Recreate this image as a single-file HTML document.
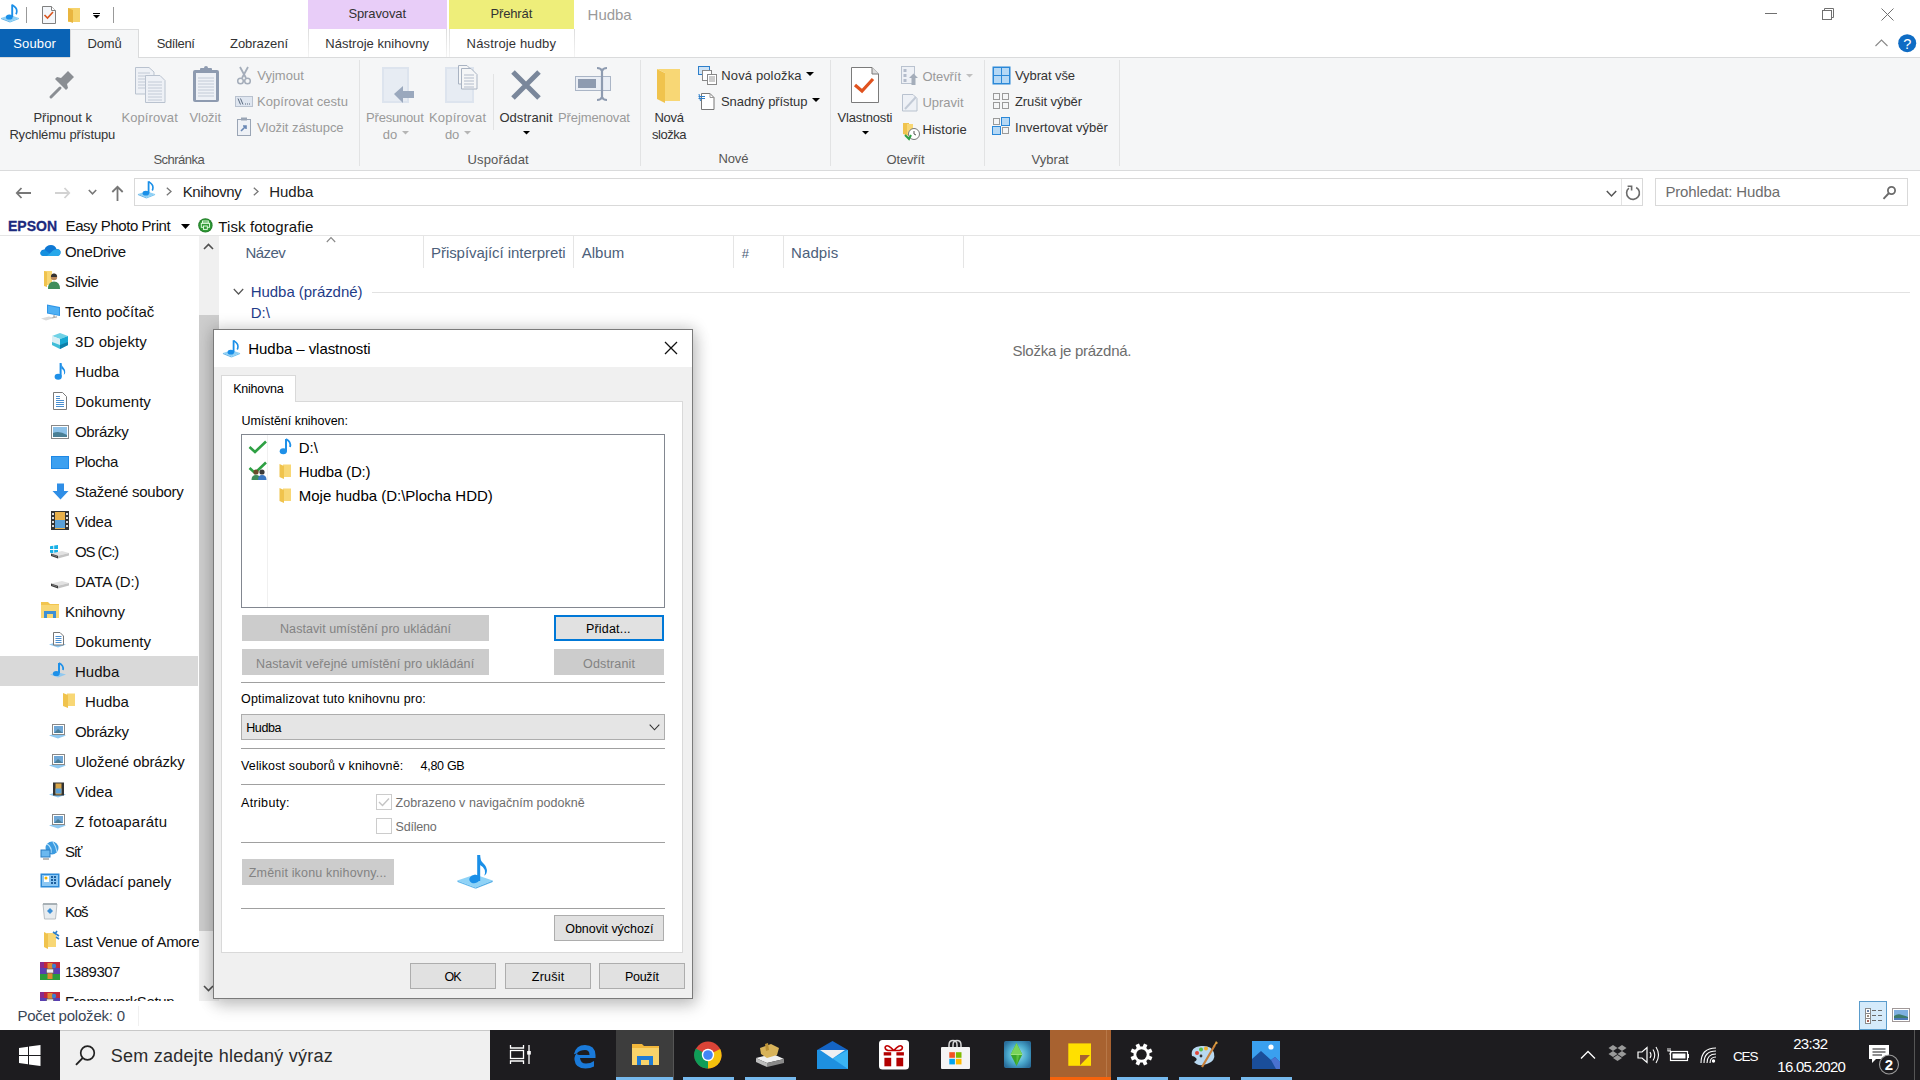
<!DOCTYPE html>
<html><head><meta charset="utf-8"><title>Hudba</title>
<style>
html,body{margin:0;padding:0;width:1920px;height:1080px;overflow:hidden;background:#fff;}
body{position:relative;font-family:"Liberation Sans", sans-serif;}
.t{position:absolute;white-space:nowrap;line-height:1;}
.r{position:absolute;}
svg.r{overflow:visible;}
</style></head><body>
<div class="r" style="left:0px;top:0px;width:1920px;height:29px;background:#fff"></div>
<svg class="r" style="left:0px;top:0px;" width="20" height="23" viewBox="0 0 20 23"><g transform="scale(1.0)"><path d="M1 18 L10 15 L19 18 L10 21.5 Z" fill="#8fd0f5"/><path d="M1 18 L10 21.5 V22.5 L1 19 Z" fill="#5fb0e6"/><path d="M10 21.5 L19 18 V19 L10 22.5 Z" fill="#6dc0f0"/><path d="M12.2 4.5 V17" stroke="#1a8fe8" stroke-width="1.9" fill="none"/><ellipse cx="9.3" cy="17" rx="3.4" ry="2.6" fill="#1a8fe8"/><path d="M12.2 5 Q16.8 7.5 16.8 11 Q16.8 13 16 14.2" stroke="#1a8fe8" stroke-width="1.7" fill="none"/></g></svg>
<div class="r" style="left:26px;top:7px;width:1px;height:16px;background:#999"></div>
<svg class="r" style="left:41px;top:6px;" width="16" height="18" viewBox="0 0 16 18"><path d="M1.5 0.5 H10.5 L14.5 4.5 V17.5 H1.5 Z" fill="#f4f7fb" stroke="#808080"/><path d="M10.5 0.5 V4.5 H14.5" fill="#fff" stroke="#808080"/><path d="M3.5 9 L6.5 12 L12 6" stroke="#d9541e" stroke-width="1.6" fill="none"/></svg>
<svg class="r" style="left:67px;top:7px;" width="14" height="17" viewBox="0 0 14 17"><path d="M1 1 H13 V15 H1 Z" fill="#f6d36b"/><path d="M1 1 L6 3 V16 L1 14 Z" fill="#e9b53f"/></svg>
<div class="r" style="left:93px;top:13px;width:7px;height:1px;background:#000"></div>
<svg class="r" style="left:93px;top:15px;" width="7" height="4" viewBox="0 0 7 4"><path d="M0 0 H7 L3.5 3.5 Z" fill="#000"/></svg>
<div class="r" style="left:113px;top:7px;width:1px;height:16px;background:#999"></div>
<div class="r" style="left:308px;top:0px;width:139px;height:29px;background:#e8cdf8"></div>
<div class="r" style="left:449px;top:0px;width:125px;height:29px;background:#eeee7a"></div>
<div class="t" style="top:7.00px;font-size:13px;color:#333;letter-spacing:-0.112px;left:348.40px;">Spravovat</div>
<div class="t" style="top:7.00px;font-size:13px;color:#333;letter-spacing:-0.121px;left:490.40px;">Přehrát</div>
<div class="t" style="top:7.00px;font-size:15px;color:#9a9a9a;letter-spacing:-0.037px;left:587.60px;">Hudba</div>
<div class="r" style="left:1765px;top:13px;width:12px;height:1px;background:#707070"></div>
<svg class="r" style="left:1822px;top:8px;" width="14" height="13" viewBox="0 0 14 13"><rect x="0.5" y="2.5" width="9" height="9" fill="none" stroke="#707070"/><path d="M2.5 2.5 V0.5 H11.5 V9.5 H9.5" fill="none" stroke="#707070"/></svg>
<svg class="r" style="left:1881px;top:8px;" width="13" height="13" viewBox="0 0 13 13"><path d="M0.5 0.5 L12.5 12.5 M12.5 0.5 L0.5 12.5" stroke="#707070" stroke-width="1"/></svg>
<div class="r" style="left:0px;top:29px;width:1920px;height:28px;background:#fff"></div>
<div class="r" style="left:0px;top:29px;width:70px;height:28px;background:#0a63b5"></div>
<div class="t" style="top:37.00px;font-size:13px;color:#fff;letter-spacing:0.125px;left:13.30px;">Soubor</div>
<div class="r" style="left:70px;top:29px;width:69px;height:29px;background:#f5f6f7;border-left:1px solid #dadbdc;border-right:1px solid #dadbdc;border-top:1px solid #dadbdc;box-sizing:border-box"></div>
<div class="t" style="top:37.00px;font-size:13px;color:#333;letter-spacing:-0.142px;left:87.50px;">Domů</div>
<div class="t" style="top:37.00px;font-size:13px;color:#333;letter-spacing:-0.367px;left:156.70px;">Sdílení</div>
<div class="t" style="top:37.00px;font-size:13px;color:#333;letter-spacing:-0.062px;left:230.00px;">Zobrazení</div>
<div class="r" style="left:308px;top:29px;width:1px;height:28px;background:linear-gradient(#ddd,#f4f4f4)"></div>
<div class="r" style="left:446px;top:29px;width:1px;height:28px;background:linear-gradient(#ddd,#f4f4f4)"></div>
<div class="r" style="left:449px;top:29px;width:1px;height:28px;background:linear-gradient(#ddd,#f4f4f4)"></div>
<div class="r" style="left:574px;top:29px;width:1px;height:28px;background:linear-gradient(#ddd,#f4f4f4)"></div>
<div class="t" style="top:37.00px;font-size:13px;color:#333;letter-spacing:0.02px;left:325.30px;">Nástroje knihovny</div>
<div class="t" style="top:37.00px;font-size:13px;color:#333;letter-spacing:0.146px;left:466.60px;">Nástroje hudby</div>
<svg class="r" style="left:1875px;top:39px;" width="13" height="8" viewBox="0 0 13 8"><path d="M0.5 7 L6.5 1 L12.5 7" fill="none" stroke="#888" stroke-width="1.1"/></svg>
<svg class="r" style="left:1898px;top:34px;" width="19" height="19" viewBox="0 0 19 19"><circle cx="9.2" cy="9.2" r="9" fill="#0f6cc4"/><text x="9.2" y="14.6" text-anchor="middle" font-family="Liberation Sans" font-size="14.5" fill="#fff">?</text></svg>
<div class="r" style="left:0px;top:57px;width:1920px;height:114px;background:#f5f6f7;border-top:1px solid #dadbdc;border-bottom:1px solid #dadbdc;box-sizing:border-box"></div>
<div class="r" style="left:70px;top:57px;width:68px;height:1px;background:#f5f6f7"></div>
<div class="r" style="left:359px;top:60px;width:1px;height:106px;background:#e2e3e4"></div>
<div class="r" style="left:640px;top:60px;width:1px;height:106px;background:#e2e3e4"></div>
<div class="r" style="left:830px;top:60px;width:1px;height:106px;background:#e2e3e4"></div>
<div class="r" style="left:984px;top:60px;width:1px;height:106px;background:#e2e3e4"></div>
<div class="r" style="left:1119px;top:60px;width:1px;height:106px;background:#e2e3e4"></div>
<div class="r" style="left:493px;top:74px;width:1px;height:56px;background:#e2e3e4"></div>
<svg class="r" style="left:48px;top:70px;" width="30" height="30" viewBox="0 0 30 30"><path d="M3 27 L12 18" stroke="#8a8e93" stroke-width="3" stroke-linecap="round"/><path d="M10 12 L18 20 L20 18 L19 14 L26 7 L20 1 L13 8 L9 7 L7 9 Z" fill="#8a8e93"/></svg>
<div class="t" style="top:111.00px;font-size:13px;color:#333;letter-spacing:-0.003px;left:33.40px;">Připnout k</div>
<div class="t" style="top:128.00px;font-size:13px;color:#333;letter-spacing:-0.155px;left:9.40px;">Rychlému přístupu</div>
<svg class="r" style="left:135px;top:67px;" width="31" height="36" viewBox="0 0 31 36"><path d="M0.5 0.5 H14 L19 5 V27 H0.5 Z" fill="#eef1f6" stroke="#b9c2cf"/><g stroke="#c2cad6"><path d="M3 6H15M3 9H15M3 12H15M3 15H15M3 18H15M3 21H15"/></g>
<path d="M10.5 8.5 H25 L30 13.5 V35.5 H10.5 Z" fill="#eef1f6" stroke="#b9c2cf"/><g stroke="#c2cad6"><path d="M13 15H27M13 18H27M13 21H27M13 24H27M13 27H27M13 30H27M13 33H27"/></g></svg>
<div class="t" style="top:111.00px;font-size:13px;color:#9a9a9a;letter-spacing:0.084px;left:121.45px;">Kopírovat</div>
<svg class="r" style="left:192px;top:66px;" width="28" height="37" viewBox="0 0 28 37"><rect x="1" y="4" width="26" height="32" rx="2" fill="#8e9bb0"/><rect x="4" y="7" width="20" height="27" fill="#eef1f6"/><g stroke="#c2cad6"><path d="M6 12H22M6 15H22M6 18H22M6 21H22M6 24H22M6 27H22M6 30H22"/></g><rect x="8" y="2" width="12" height="5" rx="1" fill="#8e9bb0"/><circle cx="14" cy="2" r="2" fill="#8e9bb0"/></svg>
<div class="t" style="top:111.00px;font-size:13px;color:#9a9a9a;letter-spacing:-0.03px;left:189.40px;">Vložit</div>
<svg class="r" style="left:237px;top:66px;" width="14" height="19" viewBox="0 0 14 19"><path d="M3 1 L9 12 M11 1 L5 12" stroke="#a4adba" stroke-width="1.8"/><circle cx="3.5" cy="15" r="2.8" fill="none" stroke="#a4adba" stroke-width="1.5"/><circle cx="10.5" cy="15" r="2.8" fill="none" stroke="#a4adba" stroke-width="1.5"/></svg>
<div class="t" style="top:69.00px;font-size:13px;color:#9a9a9a;left:257.30px;">Vyjmout</div>
<svg class="r" style="left:235px;top:96px;" width="18" height="11" viewBox="0 0 18 11"><rect x="0.5" y="0.5" width="17" height="10" fill="#dfe6f0" stroke="#b9c2cf"/><path d="M3 2.5 L5.5 8.5 M5.5 2.5 L8 8.5" stroke="#5a6a80" stroke-width="1"/><g fill="#5a6a80"><rect x="10" y="7.5" width="1" height="1"/><rect x="12" y="7.5" width="1" height="1"/><rect x="14" y="7.5" width="1" height="1"/></g></svg>
<div class="t" style="top:95.00px;font-size:13px;color:#9a9a9a;letter-spacing:0.045px;left:257.00px;">Kopírovat cestu</div>
<svg class="r" style="left:237px;top:117px;" width="14" height="19" viewBox="0 0 14 19"><rect x="0.5" y="2.5" width="13" height="16" fill="#eef1f6" stroke="#9aa5b5"/><rect x="4" y="0.5" width="6" height="3" fill="#9aa5b5"/><path d="M4 14 L9 9 M6 9 H9 V12" stroke="#6a88b5" stroke-width="1.6" fill="none"/></svg>
<div class="t" style="top:121.00px;font-size:13px;color:#9a9a9a;letter-spacing:-0.062px;left:257.00px;">Vložit zástupce</div>
<div class="t" style="top:153.00px;font-size:13px;color:#555;letter-spacing:-0.514px;left:153.40px;">Schránka</div>
<svg class="r" style="left:380px;top:66px;" width="36" height="38" viewBox="0 0 36 38"><rect x="2" y="1" width="27" height="36" fill="#dde4ee"/><rect x="4" y="3" width="23" height="32" fill="#e7ecf3"/><path d="M14 28 L23 20 V25 H34 V32 H23 V37 Z" fill="#9aa8bd"/></svg>
<div class="t" style="top:111.00px;font-size:13px;color:#9a9a9a;letter-spacing:-0.188px;left:366.02px;">Přesunout</div>
<div class="t" style="top:128.00px;font-size:13px;color:#9a9a9a;letter-spacing:-0.1px;left:382.80px;">do</div>
<svg class="r" style="left:402px;top:131px;" width="7" height="4" viewBox="0 0 7 4"><path d="M0 0 H7 L3.5 3.5 Z" fill="#b5b5b5"/></svg>
<svg class="r" style="left:444px;top:65px;" width="35" height="39" viewBox="0 0 35 39"><rect x="1" y="2" width="29" height="36" fill="#dde4ee"/><rect x="3" y="4" width="25" height="32" fill="#e7ecf3"/>
<path d="M14.5 0.5 H23 L26 3.5 V19 H14.5 Z" fill="#f5f6f7" stroke="#a9b3c2"/><path d="M17.5 3.5 H27 L33 9.5 V24 H17.5 Z" fill="#f5f6f7" stroke="#a9b3c2"/><g stroke="#b3bccb"><path d="M20 10H30M20 13H30M20 16H30M20 19H30M20 22H30"/></g></svg>
<div class="t" style="top:111.00px;font-size:13px;color:#9a9a9a;letter-spacing:0.172px;left:429.00px;">Kopírovat</div>
<div class="t" style="top:128.00px;font-size:13px;color:#9a9a9a;letter-spacing:-0.1px;left:444.90px;">do</div>
<svg class="r" style="left:464px;top:131px;" width="7" height="4" viewBox="0 0 7 4"><path d="M0 0 H7 L3.5 3.5 Z" fill="#b5b5b5"/></svg>
<svg class="r" style="left:510px;top:69px;" width="32" height="32" viewBox="0 0 32 32"><path d="M3 3 L29 29 M29 3 L3 29" stroke="#7a879b" stroke-width="5"/></svg>
<div class="t" style="top:111.00px;font-size:13px;color:#333;letter-spacing:0.044px;left:499.45px;">Odstranit</div>
<svg class="r" style="left:523px;top:131px;" width="7" height="4" viewBox="0 0 7 4"><path d="M0 0 H7 L3.5 3.5 Z" fill="#000"/></svg>
<svg class="r" style="left:575px;top:67px;" width="38" height="35" viewBox="0 0 38 35"><rect x="0.5" y="9.5" width="35" height="14" fill="#eaeef5" stroke="#aab5c6"/><rect x="3" y="12" width="18" height="9" fill="#8e9bb0"/><path d="M22 1 Q26 1 27 4 Q28 1 32 1 M27 4 V30 M22 33 Q26 33 27 30 Q28 33 32 33" stroke="#8e9bb0" stroke-width="2.2" fill="none"/></svg>
<div class="t" style="top:111.00px;font-size:13px;color:#9a9a9a;letter-spacing:-0.1px;left:558.00px;">Přejmenovat</div>
<div class="t" style="top:153.00px;font-size:13px;color:#555;letter-spacing:0.156px;left:467.48px;">Uspořádat</div>
<svg class="r" style="left:656px;top:68px;" width="25" height="36" viewBox="0 0 25 36"><path d="M9 1 H24 V33 H9 Z" fill="#f8d775"/><path d="M1 1 L9 5 V35 L1 31 Z" fill="#f0c34d"/><path d="M1 1 H9 V5 Z" fill="#f8d775"/></svg>
<div class="t" style="top:111.00px;font-size:13px;color:#333;letter-spacing:-0.258px;left:654.40px;">Nová</div>
<div class="t" style="top:128.00px;font-size:13px;color:#333;letter-spacing:-0.475px;left:652.00px;">složka</div>
<svg class="r" style="left:698px;top:66px;" width="20" height="19" viewBox="0 0 20 19"><rect x="0.5" y="0.5" width="11" height="8" fill="#cfe3f5" stroke="#2d7fcb"/><rect x="4.5" y="4.5" width="9" height="10" fill="#fff" stroke="#888"/><rect x="9.5" y="8.5" width="9" height="10" fill="#fff" stroke="#888"/><path d="M11 11H17M11 13H17M11 15H17" stroke="#999"/></svg>
<div class="t" style="top:69.00px;font-size:13px;color:#333;letter-spacing:0.136px;left:721.25px;">Nová položka</div>
<svg class="r" style="left:806px;top:72px;" width="8" height="4" viewBox="0 0 8 4"><path d="M0 0 H8 L4 4 Z" fill="#000"/></svg>
<svg class="r" style="left:697px;top:92px;" width="19" height="19" viewBox="0 0 19 19"><path d="M4.5 1.5 H13 L17 5.5 V17.5 H4.5 Z" fill="#fff" stroke="#777"/><path d="M13 1.5 V5.5 H17" fill="none" stroke="#999"/><path d="M1.5 4.5 H8 M1.5 6.5 H8 M2 2 L3.5 9" stroke="#2d7fcb" stroke-width="1"/></svg>
<div class="t" style="top:95.00px;font-size:13px;color:#333;letter-spacing:-0.077px;left:721.00px;">Snadný přístup</div>
<svg class="r" style="left:812px;top:98px;" width="8" height="4" viewBox="0 0 8 4"><path d="M0 0 H8 L4 4 Z" fill="#000"/></svg>
<div class="t" style="top:152.00px;font-size:13px;color:#555;letter-spacing:-0.125px;left:718.50px;">Nové</div>
<svg class="r" style="left:850px;top:66px;" width="30" height="38" viewBox="0 0 30 38"><path d="M1.5 1.5 H22 L28.5 8 V36.5 H1.5 Z" fill="#fff" stroke="#7b7b7b"/><path d="M22 1.5 V8 H28.5" fill="#ddd" stroke="#7b7b7b"/><path d="M5 19 L12 25 L23 13" stroke="#e0521e" stroke-width="3.2" fill="none"/></svg>
<div class="t" style="top:111.00px;font-size:13px;color:#333;letter-spacing:-0.153px;left:837.50px;">Vlastnosti</div>
<svg class="r" style="left:862px;top:131px;" width="7" height="4" viewBox="0 0 7 4"><path d="M0 0 H7 L3.5 3.5 Z" fill="#000"/></svg>
<svg class="r" style="left:901px;top:66px;" width="18" height="20" viewBox="0 0 18 20"><rect x="0.5" y="0.5" width="13" height="17" fill="#eef1f6" stroke="#b9c2cf"/><rect x="2.5" y="3" width="3" height="3" fill="#b3bccb"/><rect x="2.5" y="8" width="3" height="3" fill="#b3bccb"/><rect x="2.5" y="13" width="3" height="3" fill="#b3bccb"/><path d="M8 12 L12.5 7.5 L17 12 H14.5 V19 H10.5 V12 Z" fill="#a4adba"/></svg>
<div class="t" style="top:70.00px;font-size:13px;color:#9a9a9a;letter-spacing:-0.083px;left:922.50px;">Otevřít</div>
<svg class="r" style="left:966px;top:74px;" width="7" height="4" viewBox="0 0 7 4"><path d="M0 0 H7 L3.5 3.5 Z" fill="#c0c0c0"/></svg>
<svg class="r" style="left:902px;top:94px;" width="17" height="18" viewBox="0 0 17 18"><path d="M0.5 0.5 H11 L15 4.5 V17 H0.5 Z" fill="#eef1f6" stroke="#b9c2cf"/><path d="M3 15 L14 3" stroke="#c2cad6" stroke-width="2"/></svg>
<div class="t" style="top:96.00px;font-size:13px;color:#9a9a9a;letter-spacing:-0.025px;left:922.50px;">Upravit</div>
<svg class="r" style="left:902px;top:122px;" width="18" height="19" viewBox="0 0 18 19"><path d="M1 1 H7 V14 L1 12 Z" fill="#f0c34d"/><path d="M5 2 H11 V12 H5 Z" fill="#f8d775"/><circle cx="12" cy="12" r="5.5" fill="#fff" stroke="#777"/><path d="M12 9 V12 L14 13" stroke="#555" fill="none"/><path d="M3 13 L7 17 L9 13" fill="none" stroke="#2ea043" stroke-width="2"/></svg>
<div class="t" style="top:123.00px;font-size:13px;color:#333;letter-spacing:0.011px;left:922.50px;">Historie</div>
<div class="t" style="top:153.00px;font-size:13px;color:#555;letter-spacing:-0.183px;left:886.60px;">Otevřít</div>
<svg class="r" style="left:992px;top:66px;" width="19" height="19" viewBox="0 0 19 19"><rect x="0.5" y="0.5" width="18" height="18" fill="#2b88d8"/><rect x="2" y="2" width="7" height="7" fill="#b5d8f5"/><rect x="10" y="2" width="7" height="7" fill="#b5d8f5"/><rect x="2" y="10" width="7" height="7" fill="#b5d8f5"/><rect x="10" y="10" width="7" height="7" fill="#b5d8f5"/></svg>
<div class="t" style="top:69.00px;font-size:13px;color:#333;letter-spacing:-0.097px;left:1015.00px;">Vybrat vše</div>
<svg class="r" style="left:992px;top:93px;" width="19" height="17" viewBox="0 0 19 17"><g fill="none" stroke="#9a9a9a"><rect x="1.5" y="0.5" width="6" height="6"/><rect x="10.5" y="0.5" width="6" height="6"/><rect x="1.5" y="9.5" width="6" height="6"/><rect x="10.5" y="9.5" width="6" height="6"/></g></svg>
<div class="t" style="top:95.00px;font-size:13px;color:#333;letter-spacing:-0.08px;left:1015.00px;">Zrušit výběr</div>
<svg class="r" style="left:992px;top:117px;" width="19" height="19" viewBox="0 0 19 19"><g fill="none" stroke="#9a9a9a"><rect x="1.5" y="1.5" width="6" height="6"/><rect x="10.5" y="10.5" width="6" height="6"/></g><rect x="9.5" y="0.5" width="8" height="8" fill="#b5d8f5" stroke="#2b88d8"/><rect x="0.5" y="9.5" width="8" height="8" fill="#b5d8f5" stroke="#2b88d8"/></svg>
<div class="t" style="top:121.00px;font-size:13px;color:#333;letter-spacing:0.02px;left:1015.00px;">Invertovat výběr</div>
<div class="t" style="top:153.00px;font-size:13px;color:#555;letter-spacing:0.005px;left:1031.62px;">Vybrat</div>
<div class="r" style="left:0px;top:171px;width:1920px;height:65px;background:#fff"></div>
<svg class="r" style="left:15px;top:186px;" width="17" height="13" viewBox="0 0 17 13"><path d="M16 7 H2 M6.5 2 L1.8 7 L6.5 12" fill="none" stroke="#777" stroke-width="1.8"/></svg>
<svg class="r" style="left:54px;top:186px;" width="17" height="13" viewBox="0 0 17 13"><path d="M1 7 H15 M10.5 2 L15.2 7 L10.5 12" fill="none" stroke="#d2d2d2" stroke-width="1.8"/></svg>
<svg class="r" style="left:88px;top:189px;" width="9" height="7" viewBox="0 0 9 7"><path d="M0.8 1 L4.5 4.8 L8.2 1" fill="none" stroke="#777" stroke-width="1.6"/></svg>
<svg class="r" style="left:111px;top:185px;" width="13" height="16" viewBox="0 0 13 16"><path d="M6.5 16 V1.5 M1.3 7 L6.5 1.8 L11.7 7" fill="none" stroke="#777" stroke-width="1.8"/></svg>
<div class="r" style="left:134px;top:178px;width:1509px;height:28px;border:1px solid #d9d9d9;box-sizing:border-box;background:#fff"></div>
<div class="r" style="left:1621px;top:179px;width:1px;height:26px;background:#e3e3e3"></div>
<svg class="r" style="left:137px;top:177px;" width="19" height="22" viewBox="0 0 19 22"><g transform="scale(0.95)"><path d="M1 18 L10 15 L19 18 L10 21.5 Z" fill="#8fd0f5"/><path d="M1 18 L10 21.5 V22.5 L1 19 Z" fill="#5fb0e6"/><path d="M10 21.5 L19 18 V19 L10 22.5 Z" fill="#6dc0f0"/><path d="M12.2 4.5 V17" stroke="#1a8fe8" stroke-width="1.9" fill="none"/><ellipse cx="9.3" cy="17" rx="3.4" ry="2.6" fill="#1a8fe8"/><path d="M12.2 5 Q16.8 7.5 16.8 11 Q16.8 13 16 14.2" stroke="#1a8fe8" stroke-width="1.7" fill="none"/></g></svg>
<svg class="r" style="left:166px;top:187px;" width="6" height="9" viewBox="0 0 6 9"><path d="M0.8 0.8 L5 4.5 L0.8 8.2" fill="none" stroke="#777" stroke-width="1.3"/></svg>
<div class="t" style="top:184.00px;font-size:15px;color:#222;letter-spacing:-0.393px;left:182.75px;">Knihovny</div>
<svg class="r" style="left:253px;top:187px;" width="6" height="9" viewBox="0 0 6 9"><path d="M0.8 0.8 L5 4.5 L0.8 8.2" fill="none" stroke="#777" stroke-width="1.3"/></svg>
<div class="t" style="top:184.00px;font-size:15px;color:#222;letter-spacing:-0.062px;left:269.30px;">Hudba</div>
<svg class="r" style="left:1606px;top:190px;" width="11" height="7" viewBox="0 0 11 7"><path d="M0.8 1 L5.5 6 L10.2 1" fill="none" stroke="#555" stroke-width="1.5"/></svg>
<svg class="r" style="left:1624px;top:184px;" width="18" height="18" viewBox="0 0 18 18"><path d="M12.2 3.46 A6.4 6.4 0 1 1 4.89 4.1" fill="none" stroke="#6b6b6b" stroke-width="1.6"/><path d="M3.6 2.3 H7.6 V6.6" fill="none" stroke="#6b6b6b" stroke-width="1.6"/></svg>
<div class="r" style="left:1655px;top:178px;width:253px;height:28px;border:1px solid #d9d9d9;box-sizing:border-box;background:#fff"></div>
<div class="t" style="top:184.00px;font-size:15px;color:#6d6d6d;letter-spacing:-0.143px;left:1665.40px;">Prohledat: Hudba</div>
<svg class="r" style="left:1882px;top:185px;" width="15" height="15" viewBox="0 0 15 15"><circle cx="9.5" cy="5.5" r="3.6" fill="none" stroke="#6b6b6b" stroke-width="1.8"/><path d="M7 8 L1.5 13.8" stroke="#6b6b6b" stroke-width="1.9"/></svg>
<div class="t" style="top:218.00px;font-size:15px;color:#1c2a7e;font-weight:bold;left:7.75px;transform:scaleX(0.9352);transform-origin:0 0;-webkit-text-stroke:0.3px #1c2a7e">EPSON</div>
<div class="t" style="top:218.00px;font-size:15px;color:#111;letter-spacing:-0.45px;left:65.60px;">Easy Photo Print</div>
<svg class="r" style="left:181px;top:224px;" width="9" height="5" viewBox="0 0 9 5"><path d="M0 0 H9 L4.5 5 Z" fill="#000"/></svg>
<svg class="r" style="left:198px;top:218px;" width="15" height="15" viewBox="0 0 15 15"><circle cx="7.4" cy="7.4" r="7.2" fill="#237a2a"/><circle cx="7.4" cy="7.4" r="6.3" fill="#2f9a35"/><g fill="none" stroke="#e8ffe8" stroke-width="0.9"><rect x="4.5" y="3" width="5.8" height="2"/><rect x="3.3" y="5.3" width="8.2" height="4"/><rect x="5.5" y="8" width="3.8" height="3.4" fill="#2f9a35"/></g></svg>
<div class="t" style="top:219.00px;font-size:15px;color:#111;letter-spacing:0.098px;left:218.30px;">Tisk fotografie</div>
<div class="r" style="left:0px;top:235px;width:1920px;height:1px;background:#e5e5e5"></div>
<div class="r" style="left:0px;top:236px;width:1920px;height:767px;background:#fff"></div>
<div class="r" style="left:199px;top:236px;width:20px;height:765px;background:#f0f0f0"></div>
<div class="r" style="left:199px;top:315px;width:20px;height:616px;background:#cdcdcd"></div>
<svg class="r" style="left:203px;top:243px;" width="11" height="7" viewBox="0 0 11 7"><path d="M1 6 L5.5 1.5 L10 6" fill="none" stroke="#505050" stroke-width="1.6"/></svg>
<svg class="r" style="left:203px;top:985px;" width="11" height="7" viewBox="0 0 11 7"><path d="M1 1 L5.5 5.5 L10 1" fill="none" stroke="#505050" stroke-width="1.6"/></svg>
<div class="r" style="left:0px;top:656px;width:198px;height:30px;background:#d9d9d9"></div>
<div class="r" style="left:0;top:236px;width:199px;height:765px;overflow:hidden">
<svg class="r" style="left:40px;top:8px;" width="21" height="13" viewBox="0 0 21 13"><path d="M4 12 Q0 12 0.5 8.5 Q1 5.5 4.5 5.5 Q6 1 11 1 Q15 1 16.5 5 Q21 5 20.5 9 Q20 12 17 12 Z" fill="#0f78d4"/><path d="M4 12 Q0 12 0.5 8.5 Q1 6 5 6 L13 12 Z" fill="#1490df"/><path d="M7 12 L13 6.5 Q15 5 17 5.2 Q21 5.5 20.5 9 Q20 12 17 12 Z" fill="#28a8ea"/></svg>
<div class="t" style="top:8.00px;font-size:15px;color:#111;letter-spacing:-0.311px;left:65.00px;">OneDrive</div>
<svg class="r" style="left:43px;top:34px;" width="17" height="20" viewBox="0 0 17 20"><path d="M1 1 H9 V15 H1 Z" fill="#f8d775"/><path d="M1 1 L4 2 V17 L1 16 Z" fill="#f0c34d"/><circle cx="11" cy="7" r="3.2" fill="#b8875b"/><path d="M11 3.5 A3.4 3.4 0 0 1 14 7 H8 A3.4 3.4 0 0 1 11 3.5" fill="#333"/><path d="M5 19 Q5 11.5 11 11.5 Q17 11.5 17 19 Z" fill="#3e8c5a"/></svg>
<div class="t" style="top:38.00px;font-size:15px;color:#111;letter-spacing:-0.415px;left:65.00px;">Silvie</div>
<svg class="r" style="left:41px;top:68px;" width="20" height="17" viewBox="0 0 20 17"><path d="M6 0.5 L19 3 V12 L6 9.5 Z" fill="#2f95e6"/><path d="M7 1.8 L18 4 V11 L7 8.8 Z" fill="#4fb0f4"/><path d="M13 11 V13 M10.5 13.8 L16 12.8" stroke="#b0b0b0" stroke-width="1.2"/><path d="M0 14.5 L8 12.5 L13 14 L5 16.5 Z" fill="#dadada"/></svg>
<div class="t" style="top:68.00px;font-size:15px;color:#111;letter-spacing:0.004px;left:65.00px;">Tento počítač</div>
<svg class="r" style="left:51px;top:96px;" width="18" height="18" viewBox="0 0 18 18"><path d="M9 1 L17 4 L9 7 L1 4 Z" fill="#6fd2e6"/><path d="M1 4 L9 7 V17 L1 13 Z" fill="#d9eff5"/><path d="M1 10 L9 13 V17 L1 13 Z" fill="#3fbdd8"/><path d="M9 7 L17 4 V13 L9 17 Z" fill="#16a8d2"/><path d="M9 13 L17 10 V13 L9 17 Z" fill="#0e7fa8"/></svg>
<div class="t" style="top:98.00px;font-size:15px;color:#111;letter-spacing:0.103px;left:75.00px;">3D objekty</div>
<svg class="r" style="left:54px;top:126px;" width="12" height="19" viewBox="0 0 12 19"><path d="M6.6 1 V14.5" stroke="#1e90e8" stroke-width="2"/><ellipse cx="4.2" cy="14.8" rx="3.6" ry="3" fill="#1e90e8"/><path d="M7.3 1 Q7.8 4 9.6 5.8 Q11.8 8 11.2 10.8 Q10.8 12.2 9.8 12.8 Q10.5 10.6 9.7 8.8 Q8.8 7.3 7.3 6.4 Z" fill="#1e90e8"/></svg>
<div class="t" style="top:128.00px;font-size:15px;color:#111;letter-spacing:-0.037px;left:75.00px;">Hudba</div>
<svg class="r" style="left:53px;top:156px;" width="14" height="18" viewBox="0 0 14 18"><path d="M0.5 0.5 H9.5 L13.5 4.5 V17.5 H0.5 Z" fill="#fff" stroke="#7a7a7a"/><path d="M3 4.5H7M3 6.5H7M3 8.5H11M3 10.5H11M3 12.5H11M3 14.5H11" stroke="#4a8fd0" stroke-width="1"/></svg>
<div class="t" style="top:158.00px;font-size:15px;color:#111;letter-spacing:-0.009px;left:75.00px;">Dokumenty</div>
<svg class="r" style="left:51px;top:189px;" width="18" height="14" viewBox="0 0 18 14"><rect x="0.5" y="0.5" width="17" height="13" fill="#fff" stroke="#888"/><rect x="2" y="2" width="14" height="10" fill="#8dc1e8"/><path d="M2 12 L2 8 Q8 5 16 10 V12 Z" fill="#4a7f95"/></svg>
<div class="t" style="top:188.00px;font-size:15px;color:#111;letter-spacing:-0.362px;left:75.00px;">Obrázky</div>
<svg class="r" style="left:51px;top:220px;" width="18" height="13" viewBox="0 0 18 13"><rect x="0" y="0" width="18" height="13" fill="#1e88e5"/><rect x="1" y="1" width="16" height="11" fill="#3ca0f0"/></svg>
<div class="t" style="top:218.00px;font-size:15px;color:#111;letter-spacing:-0.515px;left:75.00px;">Plocha</div>
<svg class="r" style="left:52px;top:247px;" width="17" height="17" viewBox="0 0 17 17"><path d="M5 0.5 H12 V8 H16.5 L8.5 16.5 L0.5 8 H5 Z" fill="#2f8ee6"/></svg>
<div class="t" style="top:248.00px;font-size:15px;color:#111;letter-spacing:-0.273px;left:75.00px;">Stažené soubory</div>
<svg class="r" style="left:51px;top:275px;" width="18" height="19" viewBox="0 0 18 19"><rect x="0" y="0" width="18" height="19" fill="#333"/><rect x="4" y="1" width="10" height="17" fill="#e8b04a"/><rect x="4" y="9" width="10" height="8" fill="#5aa0d8"/><g fill="#ddd"><rect x="1" y="2" width="2" height="2"/><rect x="1" y="6" width="2" height="2"/><rect x="1" y="10" width="2" height="2"/><rect x="1" y="14" width="2" height="2"/><rect x="15" y="2" width="2" height="2"/><rect x="15" y="6" width="2" height="2"/><rect x="15" y="10" width="2" height="2"/><rect x="15" y="14" width="2" height="2"/></g></svg>
<div class="t" style="top:278.00px;font-size:15px;color:#111;letter-spacing:-0.281px;left:75.00px;">Videa</div>
<svg class="r" style="left:49px;top:306px;" width="21" height="17" viewBox="0 0 21 17"><g fill="#19b0e6" transform="translate(0 3)"><path d="M1 1.2 L4.3 0.7 V4 H1 Z"/><path d="M5.2 0.6 L9 0 V4 H5.2 Z"/><path d="M1 4.9 H4.3 V8.2 L1 7.7 Z"/><path d="M5.2 4.9 H9 V9 L5.2 8.3 Z"/></g><path d="M2 11.5 L13 9 L20 11 L9 13.8 Z" fill="#e2e2e2"/><path d="M2 11.5 L9 13.8 V16.5 L2 14 Z" fill="#3c3c3c"/><path d="M9 13.8 L20 11 V13.5 L9 16.5 Z" fill="#c4c4c4"/><path d="M3 12.8 L8 14.6" stroke="#8a8a8a" stroke-width="0.8"/></svg>
<div class="t" style="top:308.00px;font-size:15px;color:#111;letter-spacing:-1.079px;left:75.00px;">OS (C:)</div>
<svg class="r" style="left:50px;top:336px;" width="20" height="17" viewBox="0 0 20 17"><path d="M1 11.5 L12 9 L19 11 L8 13.8 Z" fill="#e2e2e2"/><path d="M1 11.5 L8 13.8 V16.5 L1 14 Z" fill="#3c3c3c"/><path d="M8 13.8 L19 11 V13.5 L8 16.5 Z" fill="#c4c4c4"/><path d="M2 12.8 L7 14.6" stroke="#8a8a8a" stroke-width="0.8"/></svg>
<div class="t" style="top:338.00px;font-size:15px;color:#111;letter-spacing:-0.216px;left:75.00px;">DATA (D:)</div>
<svg class="r" style="left:40px;top:365px;" width="20" height="18" viewBox="0 0 20 18"><path d="M1 1 H8 L10 3 H19 V16 H1 Z" fill="#f2c54f"/><rect x="1" y="4" width="18" height="13" fill="#f8d775"/><path d="M4 17 V10 H16 V17 H13 V13 H7 V17 Z" fill="#3c8fd6"/></svg>
<div class="t" style="top:368.00px;font-size:15px;color:#111;letter-spacing:-0.25px;left:65.00px;">Knihovny</div>
<svg class="r" style="left:49px;top:396px;" width="19" height="17" viewBox="0 0 19 17"><path d="M0 12.5 L8 10 L17 12.5 L9 15.5 Z" fill="#8fc8f0"/><path d="M4.5 0.5 H11 L14.5 4 V13 H4.5 Z" fill="#fff" stroke="#777"/><path d="M6.5 4.5H12.5M6.5 6.5H12.5M6.5 8.5H12.5M6.5 10.5H12.5" stroke="#4a8fd0" stroke-width="1"/></svg>
<div class="t" style="top:398.00px;font-size:15px;color:#111;letter-spacing:0.016px;left:75.00px;">Dokumenty</div>
<svg class="r" style="left:49px;top:426px;" width="19" height="17" viewBox="0 0 19 17"><path d="M1 12.5 L8 10 L17 12.5 L9 15.5 Z" fill="#8fc8f0"/><path d="M10 1 V11" stroke="#1e90e8" stroke-width="2"/><ellipse cx="7.3" cy="11.5" rx="3.4" ry="2.6" fill="#1e90e8"/><path d="M10 1 Q15 3.5 14 8" stroke="#1e90e8" stroke-width="1.7" fill="none"/></svg>
<div class="t" style="top:428.00px;font-size:15px;color:#111;letter-spacing:0.012px;left:75.00px;">Hudba</div>
<svg class="r" style="left:62px;top:456px;" width="14" height="17" viewBox="0 0 14 17"><path d="M5 1.5 H13 V14 H5 Z" fill="#f8d775"/><path d="M1 1 L6 3 V16 L1 14 Z" fill="#f0c34d"/></svg>
<div class="t" style="top:458.00px;font-size:15px;color:#111;letter-spacing:-0.062px;left:85.00px;">Hudba</div>
<svg class="r" style="left:49px;top:487px;" width="19" height="17" viewBox="0 0 19 17"><path d="M0 12.5 L8 10 L17 12.5 L9 15.5 Z" fill="#8fc8f0"/><rect x="3.5" y="1.5" width="12" height="10" fill="#fff" stroke="#888"/><rect x="5" y="3" width="9" height="7" fill="#6fa7d6"/><path d="M5 10 L9 6 L14 10 Z" fill="#4d7f99"/></svg>
<div class="t" style="top:488.00px;font-size:15px;color:#111;letter-spacing:-0.312px;left:75.00px;">Obrázky</div>
<svg class="r" style="left:49px;top:517px;" width="19" height="17" viewBox="0 0 19 17"><path d="M0 12.5 L8 10 L17 12.5 L9 15.5 Z" fill="#8fc8f0"/><rect x="3.5" y="1.5" width="12" height="10" fill="#fff" stroke="#888"/><rect x="5" y="3" width="9" height="7" fill="#6fa7d6"/><path d="M5 10 L9 6 L14 10 Z" fill="#4d7f99"/></svg>
<div class="t" style="top:518.00px;font-size:15px;color:#111;letter-spacing:-0.146px;left:75.00px;">Uložené obrázky</div>
<svg class="r" style="left:49px;top:546px;" width="19" height="17" viewBox="0 0 19 17"><path d="M0 12.5 L8 10 L17 12.5 L9 15.5 Z" fill="#8fc8f0"/><rect x="4" y="0.5" width="11" height="13" fill="#333"/><rect x="6.5" y="1.5" width="6" height="11" fill="#d9a64a"/><rect x="6.5" y="6.5" width="6" height="5" fill="#5aa0d8"/></svg>
<div class="t" style="top:548.00px;font-size:15px;color:#111;letter-spacing:-0.106px;left:75.00px;">Videa</div>
<svg class="r" style="left:49px;top:577px;" width="19" height="17" viewBox="0 0 19 17"><path d="M0 12.5 L8 10 L17 12.5 L9 15.5 Z" fill="#8fc8f0"/><rect x="3.5" y="1.5" width="12" height="10" fill="#fff" stroke="#888"/><rect x="5" y="3" width="9" height="7" fill="#6fa7d6"/><path d="M5 10 L9 6 L14 10 Z" fill="#4d7f99"/></svg>
<div class="t" style="top:578.00px;font-size:15px;color:#111;letter-spacing:0.229px;left:75.00px;">Z fotoaparátu</div>
<svg class="r" style="left:40px;top:605px;" width="20" height="19" viewBox="0 0 20 19"><circle cx="12" cy="7" r="6.5" fill="#3c9be0"/><path d="M7 3 Q12 6 11 12 M13 1 Q16 5 17 11" stroke="#b5e0fa" stroke-width="1.2" fill="none"/><rect x="1" y="9" width="9" height="7" fill="#6bb8ef" stroke="#2a7cc2"/><path d="M3 18 H9" stroke="#777"/></svg>
<div class="t" style="top:608.00px;font-size:15px;color:#111;letter-spacing:-1.188px;left:65.00px;">Síť</div>
<svg class="r" style="left:40px;top:637px;" width="20" height="16" viewBox="0 0 20 16"><rect x="0.5" y="0.5" width="19" height="14" fill="#2c8ad8"/><rect x="2" y="2" width="16" height="11" fill="#8cc7f3"/><rect x="4" y="3" width="5" height="6" fill="#fff"/><g fill="#1e5f9e"><rect x="11" y="3" width="2" height="2"/><rect x="14" y="3" width="2" height="2"/><rect x="11" y="6" width="2" height="2"/><rect x="14" y="6" width="2" height="2"/><rect x="11" y="9" width="2" height="2"/><rect x="14" y="9" width="2" height="2"/></g><circle cx="6" cy="5" r="1.5" fill="#f4b400"/></svg>
<div class="t" style="top:638.00px;font-size:15px;color:#111;letter-spacing:-0.086px;left:65.00px;">Ovládací panely</div>
<svg class="r" style="left:42px;top:665px;" width="16" height="19" viewBox="0 0 16 19"><path d="M1 3 H15 L13.5 18 H2.5 Z" fill="#e8ecef" stroke="#b8bfc4"/><path d="M1 3 H15" stroke="#9aa3a8" stroke-width="1.5"/><path d="M5 10 L8 7 L11 10 L8 13 Z" fill="#3c8fd6"/></svg>
<div class="t" style="top:668.00px;font-size:15px;color:#111;letter-spacing:-1.137px;left:65.00px;">Koš</div>
<svg class="r" style="left:43px;top:695px;" width="17" height="19" viewBox="0 0 17 19"><path d="M4 2 H13 V16 H4 Z" fill="#f8d775"/><path d="M1 1 L5 3 V18 L1 16 Z" fill="#f0c34d"/><path d="M10 1 L16 5 M12 3 L14 0 M13 6 L16 8" stroke="#2d7fcb" stroke-width="1.6"/></svg>
<div class="t" style="top:698.00px;font-size:15px;color:#111;letter-spacing:-0.264px;left:65.00px;">Last Venue of Amore</div>
<svg class="r" style="left:40px;top:726px;" width="20" height="18" viewBox="0 0 20 18"><rect x="0" y="0" width="20" height="6" fill="#c0283c"/><rect x="0" y="0" width="4" height="6" fill="#8a2a8a"/><rect x="0" y="6" width="20" height="6" fill="#5a3fb0"/><rect x="0" y="12" width="20" height="6" fill="#2c9a3c"/><rect x="7.5" y="1" width="5" height="16" fill="#e08a30"/><rect x="6.5" y="7" width="7" height="4" fill="#f0f0f0" stroke="#555" stroke-width="0.6"/><circle cx="14" cy="4" r="2.2" fill="#3a80d0"/></svg>
<div class="t" style="top:728.00px;font-size:15px;color:#111;letter-spacing:-0.496px;left:65.00px;">1389307</div>
<svg class="r" style="left:40px;top:756px;" width="20" height="18" viewBox="0 0 20 18"><rect x="0" y="0" width="20" height="6" fill="#c0283c"/><rect x="0" y="0" width="4" height="6" fill="#8a2a8a"/><rect x="0" y="6" width="20" height="6" fill="#5a3fb0"/><rect x="0" y="12" width="20" height="6" fill="#2c9a3c"/><rect x="7.5" y="1" width="5" height="16" fill="#e08a30"/><rect x="6.5" y="7" width="7" height="4" fill="#f0f0f0" stroke="#555" stroke-width="0.6"/><circle cx="14" cy="4" r="2.2" fill="#3a80d0"/></svg>
<div class="t" style="top:758.00px;font-size:15px;color:#111;letter-spacing:-0.35px;left:65.00px;">FrameworkSetup</div>
</div>
<div class="t" style="top:245.00px;font-size:15px;color:#4c607a;letter-spacing:-0.55px;left:245.50px;">Název</div>
<svg class="r" style="left:326px;top:236px;" width="10" height="7" viewBox="0 0 10 7"><path d="M0.8 6 L5 1.5 L9.2 6" fill="none" stroke="#888" stroke-width="1.1"/></svg>
<div class="r" style="left:423px;top:236px;width:1px;height:32px;background:#e5e5e5"></div>
<div class="r" style="left:573px;top:236px;width:1px;height:32px;background:#e5e5e5"></div>
<div class="r" style="left:733px;top:236px;width:1px;height:32px;background:#e5e5e5"></div>
<div class="r" style="left:783px;top:236px;width:1px;height:32px;background:#e5e5e5"></div>
<div class="r" style="left:963px;top:236px;width:1px;height:32px;background:#e5e5e5"></div>
<div class="t" style="top:245.00px;font-size:15px;color:#4c607a;letter-spacing:-0.058px;left:431.00px;">Přispívající interpreti</div>
<div class="t" style="top:245.00px;font-size:15px;color:#4c607a;letter-spacing:0.025px;left:581.70px;">Album</div>
<div class="t" style="top:247.00px;font-size:13px;color:#4c607a;left:741.70px;">#</div>
<div class="t" style="top:245.00px;font-size:15px;color:#4c607a;letter-spacing:0.11px;left:791.00px;">Nadpis</div>
<svg class="r" style="left:233px;top:288px;" width="11" height="7" viewBox="0 0 11 7"><path d="M0.8 1 L5.5 6 L10.2 1" fill="none" stroke="#555" stroke-width="1.2"/></svg>
<div class="t" style="top:284.00px;font-size:15px;color:#1f3c88;letter-spacing:-0.066px;left:250.80px;">Hudba (prázdné)</div>
<div class="r" style="left:372px;top:292px;width:1538px;height:1px;background:#e2e2e2"></div>
<div class="t" style="top:305.00px;font-size:15px;color:#1f3c88;letter-spacing:-0.025px;left:250.80px;">D:\</div>
<div class="t" style="top:343.00px;font-size:15px;color:#6d6d6d;letter-spacing:-0.257px;left:1012.50px;">Složka je prázdná.</div>
<div class="r" style="left:0px;top:1003px;width:1920px;height:27px;background:#fff"></div>
<div class="t" style="top:1008.00px;font-size:15px;color:#3a4656;letter-spacing:-0.218px;left:17.40px;">Počet položek: 0</div>
<div class="r" style="left:138px;top:1006px;width:1px;height:20px;background:#f0f0f0"></div>
<div class="r" style="left:1859px;top:1001px;width:28px;height:29px;background:#d5ebfb;border:1px solid #5a9ccc;box-sizing:border-box"></div>
<svg class="r" style="left:1864px;top:1008px;" width="20" height="17" viewBox="0 0 20 17"><g fill="#fff" stroke="#8a8a8a"><rect x="1.5" y="0.5" width="5" height="5"/><rect x="1.5" y="5.5" width="5" height="5"/><rect x="1.5" y="10.5" width="5" height="5"/></g><circle cx="4" cy="3" r="1" fill="#3a5a8a"/><circle cx="4" cy="8" r="1" fill="#776655"/><circle cx="4" cy="13" r="1" fill="#8a3020"/><g stroke="#6a6a6a" stroke-width="1"><path d="M8 2.5H12M14 2.5H18M8 7.5H12M14 7.5H18M8 12.5H12M14 12.5H18"/></g></svg>
<svg class="r" style="left:1892px;top:1008px;" width="18" height="14" viewBox="0 0 18 14"><rect x="0.5" y="0.5" width="17" height="13" fill="#fff" stroke="#a09898"/><rect x="2" y="2" width="14" height="10" fill="#7fb0e0"/><path d="M2 8 Q6 5 10 7 Q14 8 16 9 V12 H2 Z" fill="#3d7a6a"/><path d="M2 10 H16 V12 H2 Z" fill="#4a78b8"/></svg>
<div class="r" style="left:213px;top:329px;width:480px;height:670px;box-shadow:0 0 14px 2px rgba(0,0,0,0.16), 3px 7px 16px rgba(0,0,0,0.16)"></div>
<div class="r" style="left:213px;top:329px;width:480px;height:670px;background:#f0f0f0;border:1px solid #7a7a7a;box-sizing:border-box"></div>
<div class="r" style="left:214px;top:330px;width:478px;height:37px;background:#fff"></div>
<svg class="r" style="left:222px;top:336px;" width="19" height="22" viewBox="0 0 19 22"><g transform="scale(0.95)"><path d="M1 18 L10 15 L19 18 L10 21.5 Z" fill="#8fd0f5"/><path d="M1 18 L10 21.5 V22.5 L1 19 Z" fill="#5fb0e6"/><path d="M10 21.5 L19 18 V19 L10 22.5 Z" fill="#6dc0f0"/><path d="M12.2 4.5 V17" stroke="#1a8fe8" stroke-width="1.9" fill="none"/><ellipse cx="9.3" cy="17" rx="3.4" ry="2.6" fill="#1a8fe8"/><path d="M12.2 5 Q16.8 7.5 16.8 11 Q16.8 13 16 14.2" stroke="#1a8fe8" stroke-width="1.7" fill="none"/></g></svg>
<div class="t" style="top:341.00px;font-size:15px;color:#000;letter-spacing:-0.063px;left:248.30px;">Hudba – vlastnosti</div>
<svg class="r" style="left:664px;top:341px;" width="14" height="14" viewBox="0 0 14 14"><path d="M1 1 L13 13 M13 1 L1 13" stroke="#111" stroke-width="1.3"/></svg>
<div class="r" style="left:221px;top:401px;width:462px;height:552px;background:#fff;border:1px solid #d9d9d9;box-sizing:border-box"></div>
<div class="r" style="left:221px;top:375px;width:75px;height:27px;background:#fff;border:1px solid #d9d9d9;border-bottom:none;box-sizing:border-box"></div>
<div class="t" style="top:383.00px;font-size:12.5px;color:#000;letter-spacing:-0.218px;left:233.20px;">Knihovna</div>
<div class="t" style="top:415.00px;font-size:12.5px;color:#000;letter-spacing:-0.024px;left:241.40px;">Umístění knihoven:</div>
<div class="r" style="left:241px;top:434px;width:424px;height:174px;background:#fff;border:1px solid #828790;box-sizing:border-box"></div>
<div class="r" style="left:267px;top:435px;width:1px;height:172px;background:#f0f0f0"></div>
<svg class="r" style="left:248px;top:440px;" width="20" height="14" viewBox="0 0 20 14"><path d="M1.5 7 L7 12 L18 1.5" fill="none" stroke="#2ea043" stroke-width="2.6"/></svg>
<svg class="r" style="left:279px;top:438px;" width="13" height="17" viewBox="0 0 13 17"><path d="M7 1 V13" stroke="#1e90e8" stroke-width="2"/><ellipse cx="4.3" cy="13.3" rx="3.6" ry="3" fill="#1e90e8"/><path d="M7 1 Q12.5 4 11 9" stroke="#1e90e8" stroke-width="1.8" fill="none"/></svg>
<div class="t" style="top:440.00px;font-size:15px;color:#000;letter-spacing:-0.025px;left:298.80px;">D:\</div>
<svg class="r" style="left:248px;top:461px;" width="20" height="20" viewBox="0 0 20 20"><path d="M1.5 7 L7 12 L18 1.5" fill="none" stroke="#2ea043" stroke-width="2.6"/><circle cx="8" cy="11" r="2.6" fill="#6b4a2b"/><path d="M3.5 19 Q3.5 14 8 14 Q12.5 14 12.5 19 Z" fill="#3e8c5a"/><circle cx="14" cy="11" r="2.6" fill="#3a3a3a"/><path d="M10 19 Q10 14 14 14 Q18.5 14 18.5 19 Z" fill="#3b78c2"/></svg>
<svg class="r" style="left:279px;top:463px;" width="13" height="17" viewBox="0 0 13 17"><path d="M4 1.5 H12 V14 H4 Z" fill="#f8d775"/><path d="M0.5 1 L5 3 V16 L0.5 14 Z" fill="#f0c34d"/></svg>
<div class="t" style="top:464.00px;font-size:15px;color:#000;letter-spacing:-0.175px;left:298.80px;">Hudba (D:)</div>
<svg class="r" style="left:279px;top:487px;" width="13" height="17" viewBox="0 0 13 17"><path d="M4 1.5 H12 V14 H4 Z" fill="#f8d775"/><path d="M0.5 1 L5 3 V16 L0.5 14 Z" fill="#f0c34d"/></svg>
<div class="t" style="top:488.00px;font-size:15px;color:#000;letter-spacing:-0.01px;left:298.80px;">Moje hudba (D:\Plocha HDD)</div>
<div class="r" style="left:242px;top:615px;width:247px;height:26px;background:#cccccc;border:1px solid #cccccc;box-sizing:border-box"></div>
<div class="t" style="top:623.00px;font-size:12.5px;color:#838383;letter-spacing:0.073px;left:280.00px;">Nastavit umístění pro ukládání</div>
<div class="r" style="left:554px;top:615px;width:110px;height:26px;background:#e1e1e1;border:2px solid #0078d7;box-sizing:border-box"></div>
<div class="t" style="top:623.00px;font-size:12.5px;color:#000;letter-spacing:0.184px;left:586.00px;">Přidat...</div>
<div class="r" style="left:242px;top:649px;width:247px;height:26px;background:#cccccc;border:1px solid #cccccc;box-sizing:border-box"></div>
<div class="t" style="top:658.00px;font-size:12.5px;color:#838383;letter-spacing:0.13px;left:256.00px;">Nastavit veřejné umístění pro ukládání</div>
<div class="r" style="left:554px;top:649px;width:110px;height:26px;background:#cccccc;border:1px solid #cccccc;box-sizing:border-box"></div>
<div class="t" style="top:658.00px;font-size:12.5px;color:#838383;letter-spacing:0.156px;left:583.00px;">Odstranit</div>
<div class="r" style="left:241px;top:682px;width:424px;height:1px;background:#a0a0a0"></div>
<div class="t" style="top:693.00px;font-size:12.5px;color:#000;letter-spacing:0.2px;left:241.00px;">Optimalizovat tuto knihovnu pro:</div>
<div class="r" style="left:241px;top:714px;width:424px;height:26px;background:#e5e5e5;border:1px solid #adadad;box-sizing:border-box"></div>
<div class="t" style="top:722.00px;font-size:12.5px;color:#000;letter-spacing:-0.394px;left:246.20px;">Hudba</div>
<svg class="r" style="left:649px;top:724px;" width="11" height="7" viewBox="0 0 11 7"><path d="M0.7 0.7 L5.5 5.8 L10.3 0.7" fill="none" stroke="#333" stroke-width="1.1"/></svg>
<div class="r" style="left:241px;top:748px;width:424px;height:1px;background:#a0a0a0"></div>
<div class="t" style="top:760.00px;font-size:12.5px;color:#000;letter-spacing:0.142px;left:241.00px;">Velikost souborů v knihovně:</div>
<div class="t" style="top:760.00px;font-size:12.5px;color:#000;letter-spacing:-0.296px;left:420.60px;">4,80 GB</div>
<div class="r" style="left:241px;top:784px;width:424px;height:1px;background:#a0a0a0"></div>
<div class="t" style="top:797.00px;font-size:12.5px;color:#000;letter-spacing:0.341px;left:241.00px;">Atributy:</div>
<div class="r" style="left:376px;top:794px;width:16px;height:16px;background:#fff;border:1px solid #cccccc;box-sizing:border-box"></div>
<svg class="r" style="left:378px;top:797px;" width="12" height="10" viewBox="0 0 12 10"><path d="M1 5 L4.5 8.5 L11 1.5" fill="none" stroke="#c4c4c4" stroke-width="1.4"/></svg>
<div class="t" style="top:797.00px;font-size:12.5px;color:#6d6d6d;letter-spacing:0.029px;left:395.60px;">Zobrazeno v navigačním podokně</div>
<div class="r" style="left:376px;top:818px;width:16px;height:16px;background:#fff;border:1px solid #cccccc;box-sizing:border-box"></div>
<div class="t" style="top:821.00px;font-size:12.5px;color:#6d6d6d;letter-spacing:-0.229px;left:395.60px;">Sdíleno</div>
<div class="r" style="left:241px;top:842px;width:424px;height:1px;background:#a0a0a0"></div>
<div class="r" style="left:242px;top:859px;width:152px;height:26px;background:#cccccc;border:1px solid #cccccc;box-sizing:border-box"></div>
<div class="t" style="top:867.00px;font-size:12.5px;color:#838383;letter-spacing:0.171px;left:248.80px;">Změnit ikonu knihovny...</div>
<svg class="r" style="left:455px;top:852px;" width="40" height="38" viewBox="0 0 40 38"><path d="M2.3 28.6 L20 22.5 L37.7 28.6 L20.6 35.5 Z" fill="#8fd3f7"/><path d="M2.3 28.6 L20.6 35.5 V36.8 L2.6 30 Z" fill="#62b8ec"/><path d="M20.6 35.5 L37.7 28.6 V30 L20.6 36.8 Z" fill="#55aee6"/><rect x="22.2" y="3" width="3" height="26" fill="#1a8fe8"/><path d="M25 3 Q25 8 28 11 Q32.5 15 31.8 20 Q31.5 22.5 29.3 23.8 Q30.5 21 29.8 18 Q29 15 25 13 Z" fill="#1a8fe8"/><ellipse cx="19.6" cy="27" rx="5.4" ry="4.1" transform="rotate(-12 19.6 27)" fill="#1a8fe8"/></svg>
<div class="r" style="left:241px;top:908px;width:424px;height:1px;background:#a0a0a0"></div>
<div class="r" style="left:554px;top:915px;width:110px;height:26px;background:#e1e1e1;border:1px solid #adadad;box-sizing:border-box"></div>
<div class="t" style="top:923.00px;font-size:12.5px;color:#000;letter-spacing:-0.05px;left:565.25px;">Obnovit výchozí</div>
<div class="r" style="left:410px;top:963px;width:86px;height:26px;background:#e1e1e1;border:1px solid #adadad;box-sizing:border-box"></div>
<div class="t" style="top:971.00px;font-size:12.5px;color:#000;letter-spacing:-1.0px;left:444.50px;">OK</div>
<div class="r" style="left:505px;top:963px;width:86px;height:26px;background:#e1e1e1;border:1px solid #adadad;box-sizing:border-box"></div>
<div class="t" style="top:971.00px;font-size:12.5px;color:#000;letter-spacing:0.21px;left:531.85px;">Zrušit</div>
<div class="r" style="left:599px;top:963px;width:86px;height:26px;background:#e1e1e1;border:1px solid #adadad;box-sizing:border-box"></div>
<div class="t" style="top:971.00px;font-size:12.5px;color:#000;letter-spacing:-0.32px;left:625.05px;">Použít</div>
<div class="r" style="left:0px;top:1030px;width:1920px;height:50px;background:#1d1c1f"></div>
<svg class="r" style="left:19px;top:1045px;" width="22" height="21" viewBox="0 0 22 21"><g fill="#fff"><path d="M0 3 L9 1.7 V10 H0 Z"/><path d="M10 1.5 L21.5 0 V10 H10 Z"/><path d="M0 11 H9 V19.3 L0 18 Z"/><path d="M10 11 H21.5 V21 L10 19.5 Z"/></g></svg>
<div class="r" style="left:60px;top:1030px;width:430px;height:50px;background:#f0f0f0;border-top:1px solid #c8c8c8;box-sizing:border-box"></div>
<svg class="r" style="left:75px;top:1045px;" width="21" height="21" viewBox="0 0 21 21"><circle cx="12.5" cy="8" r="6.8" fill="none" stroke="#222" stroke-width="1.7"/><path d="M7.8 12.8 L1 19.8" stroke="#222" stroke-width="1.9"/></svg>
<div class="t" style="top:1047.00px;font-size:18px;color:#2b2b2b;letter-spacing:0.245px;left:110.70px;">Sem zadejte hledaný výraz</div>
<svg class="r" style="left:509px;top:1044px;" width="22" height="21" viewBox="0 0 22 21"><g fill="none" stroke="#fff" stroke-width="1.3"><path d="M1.5 1 V4 H14.5 V1"/><rect x="1.5" y="6.5" width="13" height="8"/><path d="M1.5 20 V17 H14.5 V20"/><path d="M20 1 V20"/></g><rect x="18.2" y="7" width="3.6" height="3.6" fill="#fff"/></svg>
<svg class="r" style="left:571px;top:1043px;" width="26" height="26" viewBox="0 0 26 26"><path d="M3 11 Q5 2 14 2 Q24 2 24.5 12 V15 H9 Q9.5 20.5 15 20.5 Q19.5 20.5 23 18 V23.5 Q19.5 25.5 14.5 25.5 Q4.5 25.5 3.5 17 Q3 12 7 9 Q4.5 12 8.8 12 H18.5 Q18.5 7 14 7 Q9 7 6 10 Q4 11.5 3 11 Z" fill="#1a7ad9"/></svg>
<div class="r" style="left:616px;top:1030px;width:57px;height:50px;background:#3d3d3d"></div>
<div class="r" style="left:673px;top:1030px;width:1px;height:50px;background:#555"></div>
<svg class="r" style="left:631px;top:1043px;" width="29" height="23" viewBox="0 0 29 23"><path d="M1 1 H11 L13 3 H28 V22 H1 Z" fill="#f2b73b"/><rect x="1" y="5" width="27" height="17" fill="#f8d36a"/><path d="M6 22 V13 H22 V22 H18 V17 H10 V22 Z" fill="#1f7cd6"/></svg>
<div class="r" style="left:616px;top:1077px;width:57px;height:3px;background:#76b9ed"></div>
<svg class="r" style="left:694px;top:1041px;" width="28" height="28" viewBox="0 0 28 28"><circle cx="14" cy="14" r="13.5" fill="#db4437"/><path d="M14 14 L26.2 8 A13.5 13.5 0 0 1 14 27.5 Z" fill="#f4c20d"/><path d="M14 14 L14 27.5 A13.5 13.5 0 0 1 1.8 7.5 Z" fill="#0f9d58"/><circle cx="14" cy="14" r="6.2" fill="#fff"/><circle cx="14" cy="14" r="4.8" fill="#4285f4"/></svg>
<div class="r" style="left:683px;top:1077px;width:51px;height:3px;background:#76b9ed"></div>
<svg class="r" style="left:755px;top:1042px;" width="30" height="26" viewBox="0 0 30 26"><path d="M1 16 L18 12 L29 17 L12 21 Z" fill="#f0f0f0"/><path d="M1 16 L12 21 V25 L1 20 Z" fill="#bcbcbc"/><path d="M12 21 L29 17 V21 L12 25 Z" fill="#8a8a8a"/><path d="M5 6 L16 2 L24 6 L22 13 L12 16 L6 12 Z" fill="#d8b35a"/><path d="M10 2 L13 1 L14 8 L11 9 Z" fill="#b99036"/></svg>
<div class="r" style="left:745px;top:1077px;width:51px;height:3px;background:#76b9ed"></div>
<svg class="r" style="left:817px;top:1041px;" width="31" height="28" viewBox="0 0 31 28"><path d="M0 9 L15.5 0 L31 9 Z" fill="#1464c4"/><rect x="0" y="9" width="31" height="19" fill="#1e90e0"/><path d="M15.5 17.5 L31 28 V9 Z" fill="#3ab4f4"/><path d="M3 9 H28 L15.5 17.5 Z" fill="#eef0f2"/></svg>
<svg class="r" style="left:879px;top:1040px;" width="31" height="30" viewBox="0 0 31 30"><rect x="0" y="0" width="30" height="29.5" rx="3.5" fill="#fff"/><rect x="4.7" y="12.2" width="7.5" height="3.3" fill="#b30000"/><rect x="17.4" y="12.2" width="7.5" height="3.3" fill="#b30000"/><rect x="5.4" y="17.8" width="6.8" height="8.5" fill="#b30000"/><rect x="17.4" y="17.8" width="6.8" height="8.5" fill="#b30000"/><path d="M14.8 10.5 Q9 4 6.5 6.5 Q5 9 9 10.5 Z M14.8 10.5 Q20.5 4 23 6.5 Q24.5 9 20.5 10.5 Z" fill="none" stroke="#c00000" stroke-width="1.6"/></svg>
<svg class="r" style="left:940px;top:1039px;" width="31" height="31" viewBox="0 0 31 31"><path d="M9 8 V6 Q9 1.5 13 1.5 Q17 1.5 17 6 V8 M13 8 V6 Q13 1.5 17 1.5 Q21 1.5 21 6 V8" fill="none" stroke="#d8d8d8" stroke-width="1.5"/><rect x="1" y="8" width="29" height="22" rx="1" fill="#f4f4f4"/><rect x="9.3" y="13.2" width="5.6" height="5.6" fill="#f25022"/><rect x="15.9" y="13.2" width="5.6" height="5.6" fill="#7fba00"/><rect x="9.3" y="19.8" width="5.6" height="5.6" fill="#00a4ef"/><rect x="15.9" y="19.8" width="5.6" height="5.6" fill="#ffb900"/></svg>
<svg class="r" style="left:1004px;top:1041px;" width="28" height="27" viewBox="0 0 28 27"><defs><radialGradient id="simg" cx="50%" cy="50%" r="60%"><stop offset="0" stop-color="#9fe6f0"/><stop offset="0.6" stop-color="#4aa8cc"/><stop offset="1" stop-color="#2a6f9c"/></radialGradient></defs><rect x="0" y="0" width="27" height="27" rx="2" fill="url(#simg)"/><path d="M12.5 2 L18.3 13.5 L12.5 25 L6.7 13.5 Z" fill="#3aa52a"/><path d="M12.5 2 L18.3 13.5 H6.7 Z" fill="#7ad45a"/><path d="M12.5 13.5 L15.5 13.5 L12.5 25 Z" fill="#5ac040"/><path d="M6.7 13.5 H18.3" stroke="#b5f090" stroke-width="0.7"/></svg>
<div class="r" style="left:1050px;top:1030px;width:61px;height:50px;background:#a86230"></div>
<div class="r" style="left:1106px;top:1030px;width:1px;height:50px;background:#b87848"></div>
<div class="r" style="left:1050px;top:1077px;width:61px;height:3px;background:#f7630c"></div>
<svg class="r" style="left:1068px;top:1043px;" width="24" height="24" viewBox="0 0 24 24"><rect x="0.3" y="0.4" width="22.7" height="22.4" fill="#ffe000"/><path d="M12 12 H22 L12 22.3 Z" fill="#a86230"/></svg>
<svg class="r" style="left:1129px;top:1042px;" width="25" height="25" viewBox="0 0 25 25"><g transform="translate(12.5 12.5)"><path d="M7.91 1.18 L10.91 2.52 L9.50 5.94 L6.43 4.76 L4.76 6.43 L5.94 9.50 L2.52 10.91 L1.18 7.91 L-1.18 7.91 L-2.52 10.91 L-5.94 9.50 L-4.76 6.43 L-6.43 4.76 L-9.50 5.94 L-10.91 2.52 L-7.91 1.18 L-7.91 -1.18 L-10.91 -2.52 L-9.50 -5.94 L-6.43 -4.76 L-4.76 -6.43 L-5.94 -9.50 L-2.52 -10.91 L-1.18 -7.91 L1.18 -7.91 L2.52 -10.91 L5.94 -9.50 L4.76 -6.43 L6.43 -4.76 L9.50 -5.94 L10.91 -2.52 L7.91 -1.18 Z" fill="#fff"/><circle r="5.2" fill="#1d1c1f"/></g></svg>
<div class="r" style="left:1117px;top:1077px;width:51px;height:3px;background:#76b9ed"></div>
<svg class="r" style="left:1189px;top:1040px;" width="30" height="30" viewBox="0 0 30 30"><path d="M3 16 Q1 7 12 6 Q23 5 25 13 Q27 21 18 24 Q9 27 5 22 Q9 20 7 18 Q5 16 3 16 Z" fill="#b8d8f0"/><circle cx="8" cy="13" r="2" fill="#e0463a"/><circle cx="12" cy="9.5" r="2" fill="#5ac048"/><circle cx="17" cy="8.5" r="2" fill="#f0b030"/><circle cx="12" cy="16" r="1.4" fill="#333"/><path d="M13 27 L26 5" stroke="#c8803a" stroke-width="2.2"/><path d="M24 7 L27 1 L29 3 Z" fill="#e0a040"/></svg>
<div class="r" style="left:1179px;top:1077px;width:51px;height:3px;background:#76b9ed"></div>
<svg class="r" style="left:1252px;top:1041px;" width="28" height="28" viewBox="0 0 28 28"><rect x="0" y="0" width="28" height="28" fill="#3aa0ef"/><path d="M0 28 V18 L9 10 L19 19 L23 16 L28 21 V28 Z" fill="#1a4e9a"/><path d="M19 19 L23 16 L28 21 V28 H24 Z" fill="#4a72d0"/><circle cx="19" cy="6" r="2.6" fill="#fff"/></svg>
<div class="r" style="left:1241px;top:1077px;width:51px;height:3px;background:#76b9ed"></div>
<svg class="r" style="left:1580px;top:1050px;" width="16" height="9" viewBox="0 0 16 9"><path d="M1 8.5 L8 1.5 L15 8.5" fill="none" stroke="#fff" stroke-width="1.3"/></svg>
<svg class="r" style="left:1608px;top:1045px;" width="19" height="17" viewBox="0 0 19 17"><g fill="#9a9a9a"><path d="M5 0 L9.5 3 L5 6 L0.5 3 Z"/><path d="M14 0 L18.5 3 L14 6 L9.5 3 Z"/><path d="M5 6 L9.5 9 L5 12 L0.5 9 Z"/><path d="M14 6 L18.5 9 L14 12 L9.5 9 Z"/><path d="M9.5 10 L14 13 L9.5 16 L5 13 Z"/></g></svg>
<svg class="r" style="left:1637px;top:1046px;" width="21" height="18" viewBox="0 0 21 18"><path d="M1 6 H5 L10 1.5 V16.5 L5 12 H1 Z" fill="none" stroke="#fff" stroke-width="1.2"/><path d="M13 6 Q15 9 13 12 M16 3.5 Q19.5 9 16 14.5 M19 1 Q24 9 19 17" fill="none" stroke="#fff" stroke-width="1.1"/></svg>
<svg class="r" style="left:1667px;top:1047px;" width="22" height="15" viewBox="0 0 22 15"><rect x="3.5" y="4.5" width="17" height="9" fill="none" stroke="#fff" stroke-width="1.2"/><rect x="5.5" y="6.5" width="13" height="5" fill="#fff"/><rect x="20.5" y="7" width="1.5" height="4" fill="#fff"/><path d="M1 1 V4 M3 1 V4 M0.5 4 H4 V6 Q4 7 2 7" stroke="#fff" stroke-width="0.9" fill="none"/></svg>
<svg class="r" style="left:1700px;top:1047px;" width="18" height="17" viewBox="0 0 18 17"><path d="M1 16 Q1 1 16 1 M4 16 Q4 4 16 4 M7 16 Q7 7 16 7 M10 16 Q10 10 16 10" fill="none" stroke="#fff" stroke-width="1.1"/><circle cx="13.5" cy="14" r="1.7" fill="#fff"/></svg>
<div class="t" style="top:1050.00px;font-size:13.5px;color:#fff;letter-spacing:-1.125px;left:1733.00px;">CES</div>
<div class="t" style="top:1036.00px;font-size:15px;color:#fff;letter-spacing:-0.675px;left:1793.20px;">23:32</div>
<div class="t" style="top:1059.00px;font-size:15px;color:#fff;letter-spacing:-0.714px;left:1777.25px;">16.05.2020</div>
<svg class="r" style="left:1868px;top:1044px;" width="34" height="30" viewBox="0 0 34 30"><path d="M1 1 H21 V15 H8 L4 19 V15 H1 Z" fill="#fff"/><path d="M4.5 5H17.5M4.5 8H17.5M4.5 11H14" stroke="#1d1c1f" stroke-width="1.2"/><circle cx="21" cy="20.5" r="9.5" fill="#1d1c1f" stroke="#9a9a9a" stroke-width="1.1"/><text x="21" y="26" text-anchor="middle" font-family="Liberation Sans" font-weight="bold" font-size="15" fill="#fff">2</text></svg>
<div class="r" style="left:1914px;top:1030px;width:1px;height:50px;background:#555"></div>
</body></html>
